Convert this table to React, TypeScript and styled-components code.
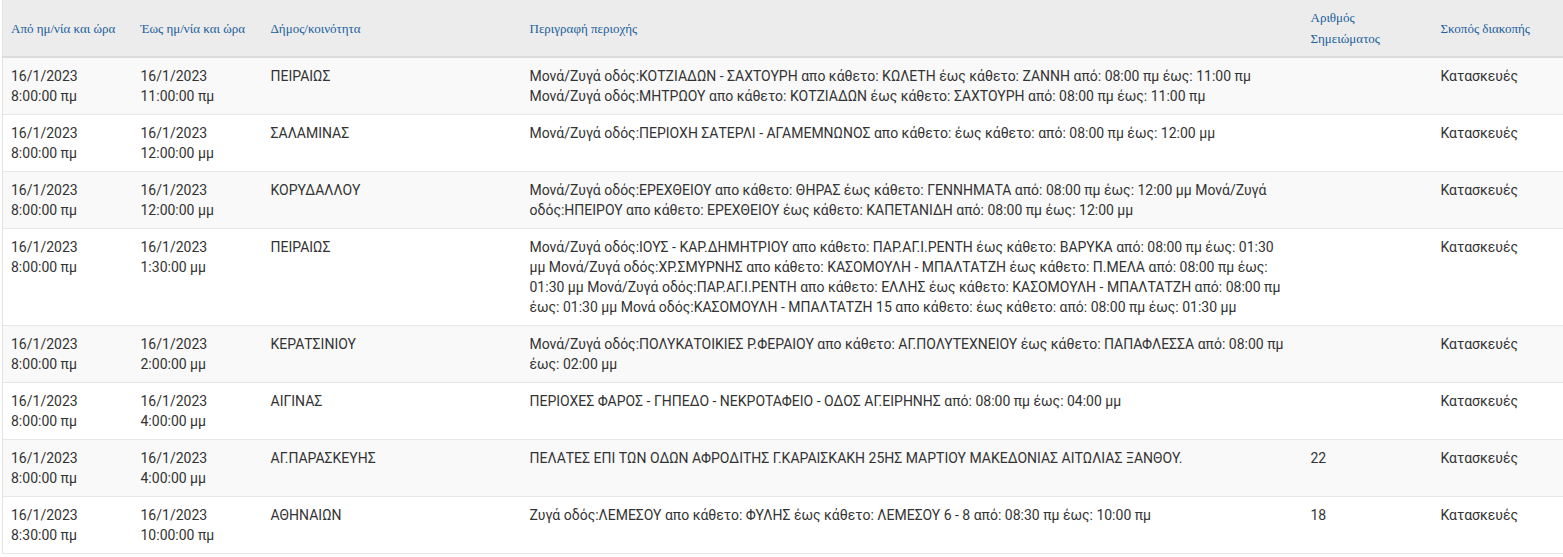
import React from 'react';
import styled, { createGlobalStyle } from 'styled-components';

interface Outage {
    from: string[],
    to: string[],
    municipality: string,
    description: string,
    noteNumber: string,
    purpose: string,
}

const outages: Outage[] = [
    {
        from: ['16/1/2023', '8:00:00 πμ'],
        to: ['16/1/2023', '11:00:00 πμ'],
        municipality: 'ΠΕΙΡΑΙΩΣ',
        description: 'Μονά/Ζυγά οδός:ΚΟΤΖΙΑΔΩΝ - ΣΑΧΤΟΥΡΗ απο κάθετο: ΚΩΛΕΤΗ έως κάθετο: ΖΑΝΝΗ από: 08:00 πμ έως: 11:00 πμ Μονά/Ζυγά οδός:ΜΗΤΡΩΟΥ απο κάθετο: ΚΟΤΖΙΑΔΩΝ έως κάθετο: ΣΑΧΤΟΥΡΗ από: 08:00 πμ έως: 11:00 πμ',
        noteNumber: '',
        purpose: 'Κατασκευές',
    },
    {
        from: ['16/1/2023', '8:00:00 πμ'],
        to: ['16/1/2023', '12:00:00 μμ'],
        municipality: 'ΣΑΛΑΜΙΝΑΣ',
        description: 'Μονά/Ζυγά οδός:ΠΕΡΙΟΧΗ ΣΑΤΕΡΛΙ - ΑΓΑΜΕΜΝΩΝΟΣ απο κάθετο: έως κάθετο: από: 08:00 πμ έως: 12:00 μμ',
        noteNumber: '',
        purpose: 'Κατασκευές',
    },
    {
        from: ['16/1/2023', '8:00:00 πμ'],
        to: ['16/1/2023', '12:00:00 μμ'],
        municipality: 'ΚΟΡΥΔΑΛΛΟΥ',
        description: 'Μονά/Ζυγά οδός:ΕΡΕΧΘΕΙΟΥ απο κάθετο: ΘΗΡΑΣ έως κάθετο: ΓΕΝΝΗΜΑΤΑ από: 08:00 πμ έως: 12:00 μμ Μονά/Ζυγά οδός:ΗΠΕΙΡΟΥ απο κάθετο: ΕΡΕΧΘΕΙΟΥ έως κάθετο: ΚΑΠΕΤΑΝΙΔΗ από: 08:00 πμ έως: 12:00 μμ',
        noteNumber: '',
        purpose: 'Κατασκευές',
    },
    {
        from: ['16/1/2023', '8:00:00 πμ'],
        to: ['16/1/2023', '1:30:00 μμ'],
        municipality: 'ΠΕΙΡΑΙΩΣ',
        description: 'Μονά/Ζυγά οδός:ΙΟΥΣ - ΚΑΡ.ΔΗΜΗΤΡΙΟΥ απο κάθετο: ΠΑΡ.ΑΓ.Ι.ΡΕΝΤΗ έως κάθετο: ΒΑΡΥΚΑ από: 08:00 πμ έως: 01:30 μμ Μονά/Ζυγά οδός:ΧΡ.ΣΜΥΡΝΗΣ απο κάθετο: ΚΑΣΟΜΟΥΛΗ - ΜΠΑΛΤΑΤΖΗ έως κάθετο: Π.ΜΕΛΑ από: 08:00 πμ έως: 01:30 μμ Μονά/Ζυγά οδός:ΠΑΡ.ΑΓ.Ι.ΡΕΝΤΗ απο κάθετο: ΕΛΛΗΣ έως κάθετο: ΚΑΣΟΜΟΥΛΗ - ΜΠΑΛΤΑΤΖΗ από: 08:00 πμ έως: 01:30 μμ Μονά οδός:ΚΑΣΟΜΟΥΛΗ - ΜΠΑΛΤΑΤΖΗ 15 απο κάθετο: έως κάθετο: από: 08:00 πμ έως: 01:30 μμ',
        noteNumber: '',
        purpose: 'Κατασκευές',
    },
    {
        from: ['16/1/2023', '8:00:00 πμ'],
        to: ['16/1/2023', '2:00:00 μμ'],
        municipality: 'ΚΕΡΑΤΣΙΝΙΟΥ',
        description: 'Μονά/Ζυγά οδός:ΠΟΛΥΚΑΤΟΙΚΙΕΣ Ρ.ΦΕΡΑΙΟΥ απο κάθετο: ΑΓ.ΠΟΛΥΤΕΧΝΕΙΟΥ έως κάθετο: ΠΑΠΑΦΛΕΣΣΑ από: 08:00 πμ έως: 02:00 μμ',
        noteNumber: '',
        purpose: 'Κατασκευές',
    },
    {
        from: ['16/1/2023', '8:00:00 πμ'],
        to: ['16/1/2023', '4:00:00 μμ'],
        municipality: 'ΑΙΓΙΝΑΣ',
        description: 'ΠΕΡΙΟΧΕΣ ΦΑΡΟΣ - ΓΗΠΕΔΟ - ΝΕΚΡΟΤΑΦΕΙΟ - ΟΔΟΣ ΑΓ.ΕΙΡΗΝΗΣ από: 08:00 πμ έως: 04:00 μμ',
        noteNumber: '',
        purpose: 'Κατασκευές',
    },
    {
        from: ['16/1/2023', '8:00:00 πμ'],
        to: ['16/1/2023', '4:00:00 μμ'],
        municipality: 'ΑΓ.ΠΑΡΑΣΚΕΥΗΣ',
        description: 'ΠΕΛΑΤΕΣ ΕΠΙ ΤΩΝ ΟΔΩΝ ΑΦΡΟΔΙΤΗΣ Γ.ΚΑΡΑΙΣΚΑΚΗ 25ΗΣ ΜΑΡΤΙΟΥ ΜΑΚΕΔΟΝΙΑΣ ΑΙΤΩΛΙΑΣ ΞΑΝΘΟΥ.',
        noteNumber: '22',
        purpose: 'Κατασκευές',
    },
    {
        from: ['16/1/2023', '8:30:00 πμ'],
        to: ['16/1/2023', '10:00:00 πμ'],
        municipality: 'ΑΘΗΝΑΙΩΝ',
        description: 'Ζυγά οδός:ΛΕΜΕΣΟΥ απο κάθετο: ΦΥΛΗΣ έως κάθετο: ΛΕΜΕΣΟΥ 6 - 8 από: 08:30 πμ έως: 10:00 πμ',
        noteNumber: '18',
        purpose: 'Κατασκευές',
    },
];

const headers = [
    'Από ημ/νία και ώρα',
    'Έως ημ/νία και ώρα',
    'Δήμος/κοινότητα',
    'Περιγραφή περιοχής',
    'Αριθμός Σημειώματος',
    'Σκοπός διακοπής',
];

const columnWidths = [130, 130, 259, 781, 130];

const GlobalStyle = createGlobalStyle`
  html, body {
    margin: 0;
    padding: 0;
    background: #ffffff;
    overflow: hidden;
  }
`;

const Wrapper = styled.div`
  padding-left: 2px;
`;

const Table = styled.table`
  width: 100%;
  border-collapse: collapse;
  table-layout: fixed;
  border-left: 1px solid #e3e3e3;
  font-family: Roboto, "Liberation Sans", sans-serif;
`;

const HeadRow = styled.tr`
  height: 56px;
  background: #ececec;
  border-bottom: 2px solid #dcdcdc;
`;

const HeadCell = styled.th`
  padding: 7px 8px;
  text-align: left;
  vertical-align: middle;
  font-family: "Liberation Serif", "DejaVu Serif", serif;
  font-size: 13px;
  font-weight: normal;
  line-height: 21px;
  color: #21609c;
`;

const Row = styled.tr<{ $striped: boolean }>`
  background: ${p => p.$striped ? '#f9f9f9' : '#ffffff'};
  border-top: 1px solid #e6e6e6;
  border-bottom: 1px solid #e6e6e6;
`;

const Cell = styled.td<{ $wide?: boolean }>`
  padding: 8px ${p => p.$wide ? '12px' : '8px'} 8px 8px;
  vertical-align: top;
  font-size: 14px;
  line-height: 20px;
  color: #333333;
`;

const Line = styled.div`
  white-space: nowrap;
`;

function App() {
    return (
        <Wrapper>
            <GlobalStyle />
            <Table>
                <colgroup>
                    {columnWidths.map((w, i) => <col key={i} style={{ width: w }} />)}
                    <col />
                </colgroup>
                <thead>
                    <HeadRow>
                        {headers.map(h => <HeadCell key={h}>{h}</HeadCell>)}
                    </HeadRow>
                </thead>
                <tbody>
                    {outages.map((o, i) => (
                        <Row key={i} $striped={i % 2 === 0}>
                            <Cell>{o.from.map(l => <Line key={l}>{l}</Line>)}</Cell>
                            <Cell>{o.to.map(l => <Line key={l}>{l}</Line>)}</Cell>
                            <Cell>{o.municipality}</Cell>
                            <Cell $wide>{o.description}</Cell>
                            <Cell>{o.noteNumber}</Cell>
                            <Cell>{o.purpose}</Cell>
                        </Row>
                    ))}
                </tbody>
            </Table>
        </Wrapper>
    );
}

export default App;
